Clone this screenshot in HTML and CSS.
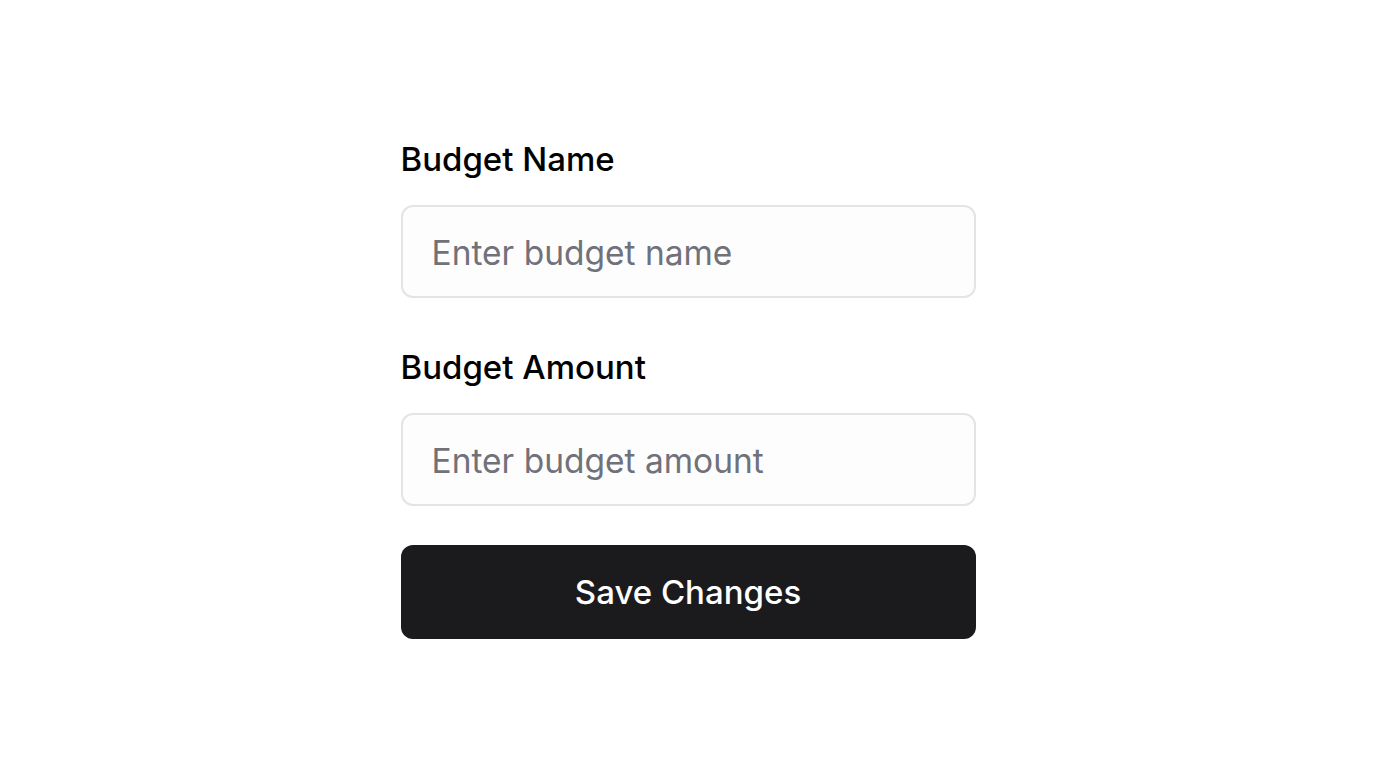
FILE: index.html
```html
<!DOCTYPE html>
<html lang="en">
<head>
<meta charset="utf-8">
<title>Edit Budget</title>
<link rel="stylesheet" href="styles.css">
</head>
<body>
<main class="page">
  <form class="form">
    <div class="field">
      <label class="label" for="name">Budget Name</label>
      <input class="input" id="name" type="text" placeholder="Enter budget name">
    </div>
    <div class="field">
      <label class="label" for="amount">Budget Amount</label>
      <input class="input" id="amount" type="text" placeholder="Enter budget amount">
    </div>
    <button class="button" type="button">Save Changes</button>
  </form>
</main>
</body>
</html>
```
FILE: styles.css
```css
* { box-sizing: border-box; }
html, body { margin: 0; padding: 0; background: #ffffff; }
body {
  font-family: Inter, "Noto Sans", sans-serif;
  color: #09090b;
}
.page {
  display: flex;
  justify-content: center;
  padding-top: 139px;
}
.form {
  width: 575px;
  display: flex;
  flex-direction: column;
}
.field {
  display: flex;
  flex-direction: column;
  margin-bottom: 49px;
}
.field:nth-child(2) { margin-bottom: 39px; }
.label {
  font-size: 33px;
  line-height: 40px;
  font-weight: 500;
  color: #000000;
  margin-bottom: 26px;
}
.input {
  height: 93px;
  border: 2px solid #e4e4e7;
  border-radius: 12px;
  background: #fdfdfd;
  padding: 2px 28px 0 29px;
  font-family: Inter, "Noto Sans", sans-serif;
  font-size: 33.5px;
  color: #09090b;
  outline: none;
}
.input::placeholder { color: #71717a; }
.button {
  height: 94px;
  border: none;
  border-radius: 12px;
  background: #1b1b1d;
  color: #ffffff;
  font-family: Inter, "Noto Sans", sans-serif;
  font-size: 33px;
  font-weight: 500;
  cursor: pointer;
}
```
